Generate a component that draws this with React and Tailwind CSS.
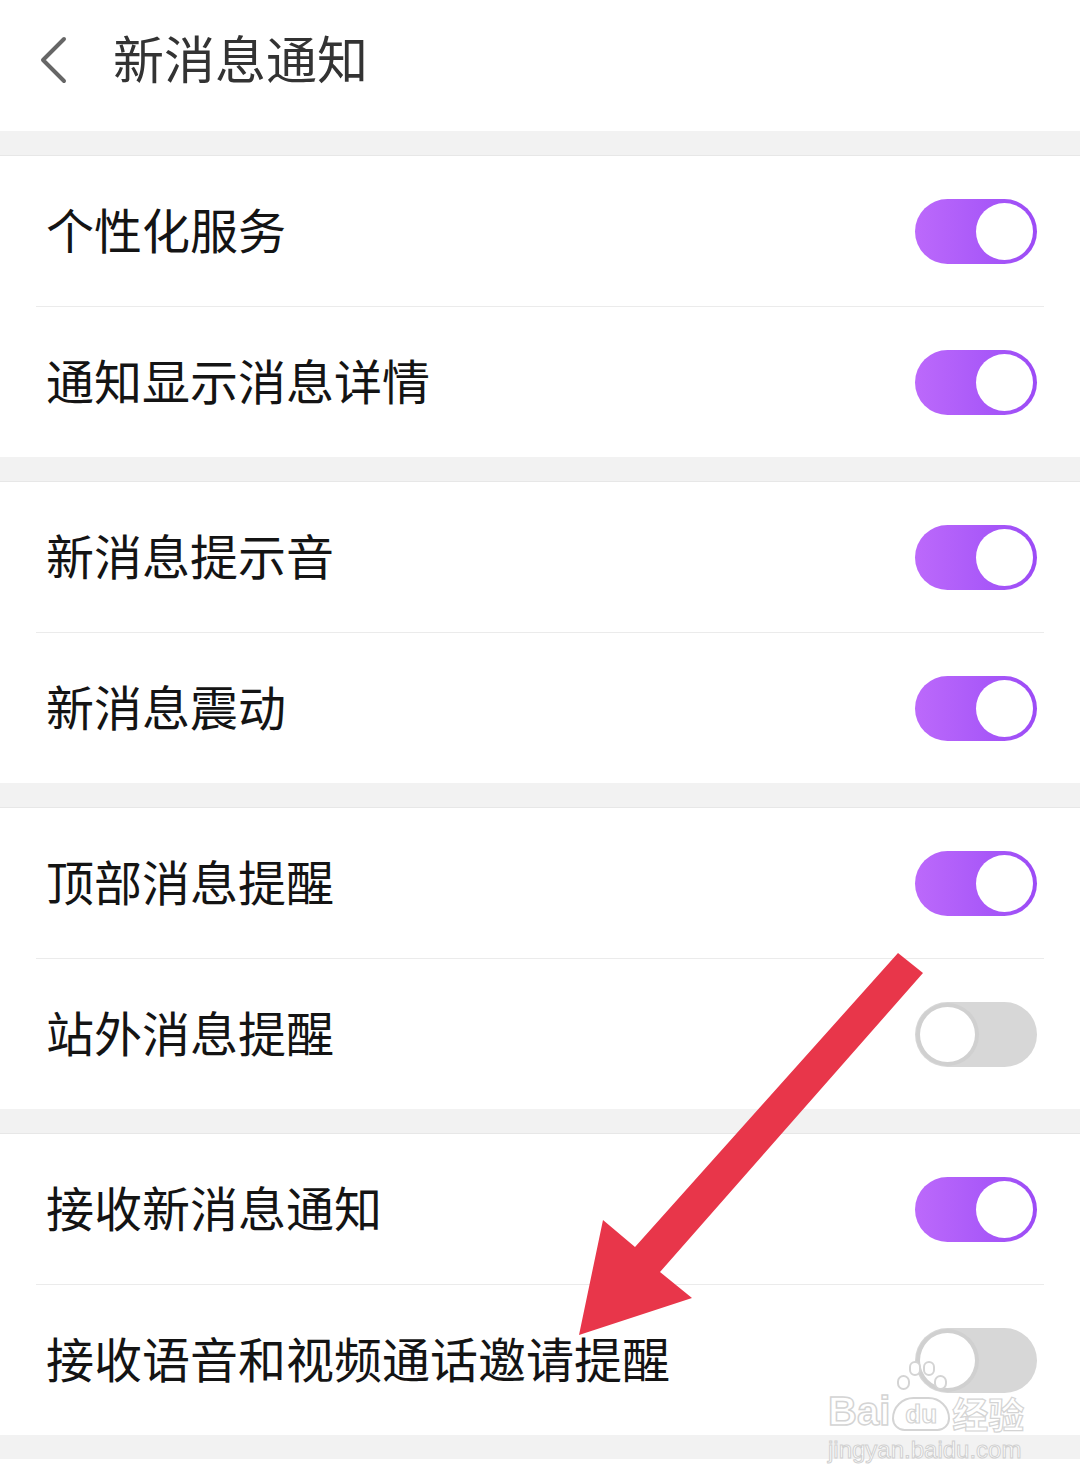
import React from "react";

function Toggle({ on }) {
  if (on) {
    return (
      <div className="w-[122px] h-[65px] rounded-full bg-gradient-to-r from-[#bc69fb] to-[#9c4bf6] flex items-center justify-end pr-[4px]">
        <div className="w-[57px] h-[57px] rounded-full bg-white" />
      </div>
    );
  }
  return (
    <div className="w-[122px] h-[65px] rounded-full bg-[#d7d7d7] flex items-center justify-start pl-[1px]">
      <div className="w-[63px] h-[63px] rounded-full bg-[#d0d0d0] flex items-center justify-center">
        <div className="w-[55px] h-[55px] rounded-full bg-white" />
      </div>
    </div>
  );
}

function Row({ label, on }) {
  return (
    <div className="h-[150px] flex items-center justify-between pl-[46px] pr-[43px] bg-white">
      <span className="mb-[6px] text-[48px] leading-none text-[#141414]">{label}</span>
      <Toggle on={on} />
    </div>
  );
}

function Divider() {
  return <div className="h-px bg-[#ebebeb] mx-[36px]" />;
}

function Band() {
  return <div className="h-[25px] bg-[#f2f2f2] border-b border-[#e7e7e7]" />;
}

function Group({ rows }) {
  return (
    <div className="bg-white">
      {rows.map((r, i) => (
        <React.Fragment key={r.label}>
          {i > 0 && <Divider />}
          <Row label={r.label} on={r.on} />
        </React.Fragment>
      ))}
    </div>
  );
}

export default function App() {
  return (
    <div
      className="relative w-[1080px] h-[1484px] bg-white overflow-hidden"
      style={{ fontFamily: '"Noto Sans CJK SC", "Noto Sans", sans-serif' }}
    >
      <div className="h-[131px] flex items-center bg-white">
        <svg width="30" height="48" viewBox="0 0 30 48" className="ml-[38px] mt-[-12px]">
          <polyline points="26,3 5,24 26,45" fill="none" stroke="#666" strokeWidth="4" strokeLinecap="round" strokeLinejoin="round" />
        </svg>
        <span className="ml-[45px] mt-[-16px] text-[51px] leading-none text-[#333]">新消息通知</span>
      </div>
      <Band />
      <Group rows={[{ label: "个性化服务", on: true }, { label: "通知显示消息详情", on: true }]} />
      <Band />
      <Group rows={[{ label: "新消息提示音", on: true }, { label: "新消息震动", on: true }]} />
      <Band />
      <Group rows={[{ label: "顶部消息提醒", on: true }, { label: "站外消息提醒", on: false }]} />
      <Band />
      <Group rows={[{ label: "接收新消息通知", on: true }, { label: "接收语音和视频通话邀请提醒", on: false }]} />
      <div className="h-[24px] bg-[#f2f2f2]" />

      <svg className="absolute left-0 top-0 pointer-events-none" width="1080" height="1484" viewBox="0 0 1080 1484">
        <polygon
          points="898,953 923,973 660,1272 692,1298 579,1335 603,1220 635,1247"
          fill="#e8364a"
        />
      </svg>

      <div className="absolute left-[828px] top-[1391px] flex flex-col items-start pointer-events-none">
        <div className="flex items-end">
          <span className="text-[40px] leading-none font-bold text-white [-webkit-text-stroke:1.5px_#d4d4d4]" style={{ fontFamily: '"Liberation Sans", sans-serif' }}>Bai</span>
          <span className="relative ml-[2px] w-[58px] h-[40px] flex items-end justify-center">
            <span className="absolute left-[5px] top-[-16px] w-[13px] h-[15px] rounded-full bg-white border-2 border-[#d4d4d4]" />
            <span className="absolute left-[17px] top-[-30px] w-[12px] h-[15px] rounded-full bg-white border-2 border-[#d4d4d4]" />
            <span className="absolute left-[31px] top-[-30px] w-[12px] h-[15px] rounded-full bg-white border-2 border-[#d4d4d4]" />
            <span className="absolute left-[42px] top-[-16px] w-[13px] h-[15px] rounded-full bg-white border-2 border-[#d4d4d4]" />
            <span className="w-[58px] h-[34px] rounded-t-[24px] rounded-b-[14px] bg-white border-2 border-[#d4d4d4] flex items-center justify-center text-[26px] leading-none font-bold text-white [-webkit-text-stroke:1.2px_#d4d4d4]" style={{ fontFamily: '"Liberation Sans", sans-serif' }}>du</span>
          </span>
          <span className="ml-[2px] text-[36px] leading-none font-bold text-white [-webkit-text-stroke:1.2px_#d4d4d4]">经验</span>
        </div>
        <span className="mt-[7px] text-[24px] leading-none text-white [-webkit-text-stroke:1px_#d0d0d0]" style={{ fontFamily: '"Liberation Sans", sans-serif' }}>jingyan.baidu.com</span>
      </div>
    </div>
  );
}
